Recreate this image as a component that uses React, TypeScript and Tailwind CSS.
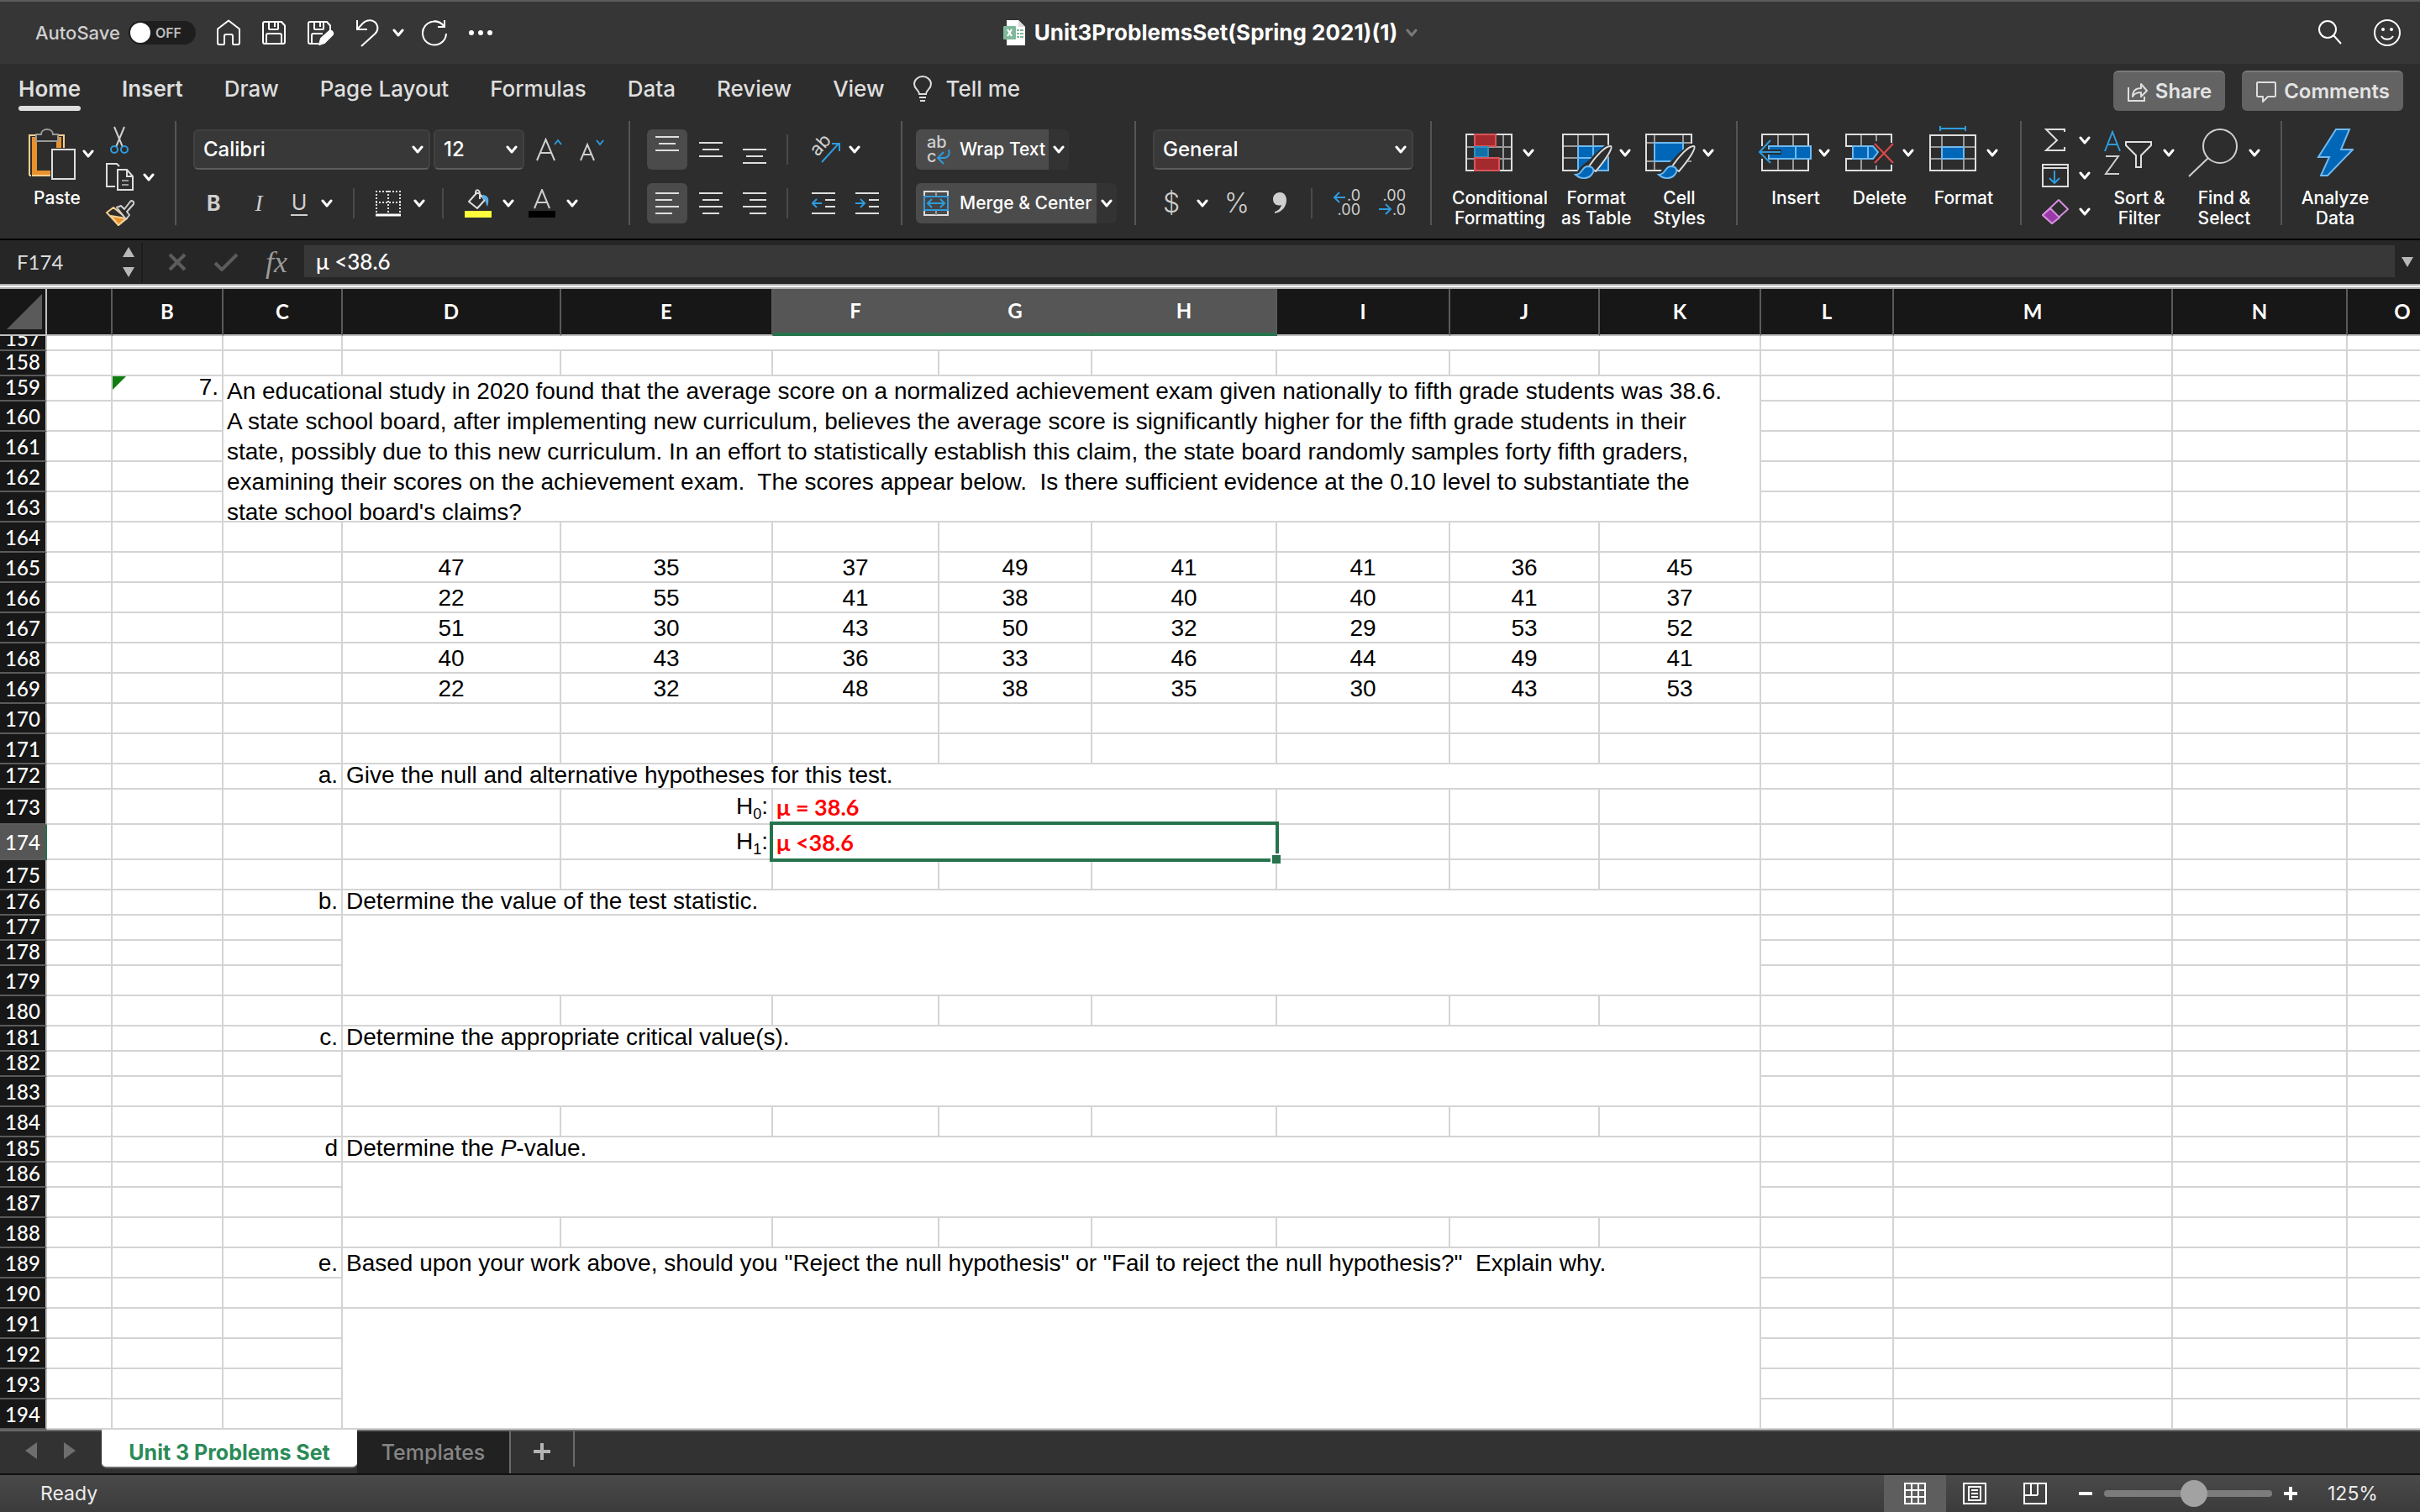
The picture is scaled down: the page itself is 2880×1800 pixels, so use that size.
import type { ReactNode } from 'react';

const FONT_UI = "font-['Inter','Liberation_Sans',sans-serif]";
const FONT_CELL = "font-['Liberation_Sans',Arial,sans-serif]";
const FONT_CALIBRI = "font-['Lato','Open_Sans',sans-serif]";

/* ---------- small shared pieces ---------- */

const Chevron = ({ color = '#fff' }: { color?: string }) => (
  <svg width="14" height="10" viewBox="0 0 14 10" fill="none" className="shrink-0">
    <path d="M2 2l5 6 5-6" stroke={color} strokeWidth="3" strokeLinecap="round" strokeLinejoin="round" />
  </svg>
);

const Divider = () => <span className="h-9 w-[2px] shrink-0 bg-[#4a4a4a]" />;

const DropButton = ({ label }: { label: string }) => (
  <button aria-label={label} className="flex h-6 shrink-0 items-center">
    <Chevron />
  </button>
);

const Group = ({ className, children }: { className: string; children: ReactNode }) => (
  <div className={`h-[124px] shrink-0 border-r-2 border-[#555] ${className}`}>{children}</div>
);

const BigButton = ({ icon, lines, arrow = true }: { icon: ReactNode; lines: string[]; arrow?: boolean }) => (
  <button className="flex min-w-[82px] flex-col items-center pt-1.5">
    <span className="flex h-16 items-center gap-3">
      {icon}
      {arrow && <Chevron />}
    </span>
    <span className="mt-2.5 text-center text-[21px] leading-6 font-medium whitespace-nowrap text-white">
      {lines.map((line) => (
        <span key={line} className="block">{line}</span>
      ))}
    </span>
  </button>
);

const SelectBox = ({ label, value, className }: { label: string; value: string; className: string }) => (
  <div className={`relative flex items-center ${className}`}>
    <select
      aria-label={label}
      defaultValue={value}
      className="h-12 w-full appearance-none rounded-md border-2 border-t-[#3f3f3f] border-r-[#424242] border-b-[#5c5c5c] border-l-[#424242] bg-[#383838] pl-2.5 text-[24px] leading-8 font-medium text-white"
    >
      <option>{value}</option>
    </select>
    <span className="pointer-events-none absolute right-2">
      <Chevron />
    </span>
  </div>
);

/* ---------- title bar ---------- */

const HomeIcon = () => (
  <svg width="30" height="32" viewBox="0 0 30 32" fill="none" stroke="#fff" strokeWidth="2" strokeLinejoin="round">
    <path d="M2 11.500L15 1.500l13 10V28a2 2 0 0 1-2 2h-5a1 1 0 0 1-1-1v-9a2 2 0 0 0-2-2h-6a2 2 0 0 0-2 2v9a1 1 0 0 1-1 1H4a2 2 0 0 1-2-2z" />
  </svg>
);

const SaveIcon = () => (
  <svg width="30" height="32" viewBox="0 0 30 32" fill="none" stroke="#fff" strokeWidth="2" strokeLinejoin="round">
    <path d="M4 3h20l4 4.500V27a2 2 0 0 1-2 2H4a2 2 0 0 1-2-2V5a2 2 0 0 1 2-2z" />
    <path d="M9 3v8a1 1 0 0 0 1 1h9a1 1 0 0 0 1-1V3M16 4v5M6 29V19a2 2 0 0 1 2-2h14a2 2 0 0 1 2 2v10" />
  </svg>
);

const SaveAsIcon = () => (
  <svg width="34" height="32" viewBox="0 0 34 32" fill="none" stroke="#fff" strokeWidth="2" strokeLinejoin="round">
    <path d="M14 29H4a2 2 0 0 1-2-2V5a2 2 0 0 1 2-2h20l4 4.500V13" />
    <path d="M9 3v8a1 1 0 0 0 1 1h9a1 1 0 0 0 1-1V3M16 4v5M6 29V19a2 2 0 0 1 2-2h11" />
    <path d="M15 30l2-7 10-9a3 3 0 0 1 4 4l-10 10z" fill="#fff" />
  </svg>
);

const UndoIcon = () => (
  <svg width="28" height="34" viewBox="0 0 28 34" fill="none" stroke="#fff" strokeWidth="2">
    <path d="M2 2v11h12" />
    <path d="M2.500 12.500L9 5.500c5-5 13-4 16 1 2.500 4.500 1.500 8.500-2 12L7 33" />
  </svg>
);

const RedoIcon = () => (
  <svg width="32" height="34" viewBox="0 0 32 34" fill="none" stroke="#fff" strokeWidth="2">
    <path d="M28 2v8h-8" />
    <path d="M27.500 9.500A14 14 0 1 0 30 18M27.500 9.500C25 5.500 20 3 16 3" />
  </svg>
);

const DotsIcon = () => (
  <svg width="30" height="8" viewBox="0 0 30 8" fill="#fff">
    <circle cx="4" cy="4" r="3" />
    <circle cx="15" cy="4" r="3" />
    <circle cx="26" cy="4" r="3" />
  </svg>
);

const FileIcon = () => (
  <svg width="28" height="32" viewBox="0 0 28 32">
    <path d="M5 1h14l8 8v22H5z" fill="#fff" />
    <path d="M19 1l8 8h-8z" fill="#dcdcdc" />
    <g fill="#7fb99b">
      <rect x="17" y="12" width="3" height="2" /><rect x="21" y="12" width="4" height="2" />
      <rect x="17" y="16" width="3" height="2" /><rect x="21" y="16" width="4" height="2" />
      <rect x="17" y="20" width="3" height="2" /><rect x="21" y="20" width="4" height="2" />
      <rect x="1" y="8" width="15" height="16" rx="1" />
    </g>
    <path d="M6 12l5 8M11 12l-5 8" stroke="#fff" strokeWidth="2" />
  </svg>
);

const TitleBar = () => (
  <header className="grid h-[76px] shrink-0 grid-cols-[1fr_auto_1fr] items-center border-t-2 border-[#5c5c5c] bg-[#363636]">
    <div className="flex items-center pl-[42px]">
      <label htmlFor="autosave" className="text-[22px] leading-8 font-medium text-[#cfcfcf]">AutoSave</label>
      <span className="relative ml-2.5 flex h-7 w-20 items-center rounded-full bg-[#1e1e1e]">
        <input id="autosave" type="checkbox" className="absolute inset-0 size-full appearance-none" />
        <span className="ml-0.5 size-6 rounded-full bg-white" />
        <span className="ml-1.5 text-[16px] leading-6 font-semibold text-[#bdbdbd]">OFF</span>
      </span>
      <div className="ml-6 flex items-center gap-6">
        <button aria-label="Home"><HomeIcon /></button>
        <button aria-label="Save"><SaveIcon /></button>
        <button aria-label="Save as"><SaveAsIcon /></button>
        <span className="flex items-center gap-4">
          <button aria-label="Undo"><UndoIcon /></button>
          <DropButton label="Undo list" />
        </span>
        <button aria-label="Redo" className="-ml-1"><RedoIcon /></button>
        <button aria-label="More"><DotsIcon /></button>
      </div>
    </div>
    <div className="flex items-center gap-2.5">
      <FileIcon />
      <h1 className="text-[26px] leading-8 font-bold text-white">Unit3ProblemsSet(Spring 2021)(1)</h1>
      <Chevron color="#7a7a7a" />
    </div>
    <div className="flex items-center justify-end gap-9 pr-[22px]">
      <button aria-label="Search">
        <svg width="30" height="32" viewBox="0 0 30 32" fill="none" stroke="#fff" strokeWidth="2">
          <circle cx="12" cy="12" r="10" />
          <path d="M19 19l9 10" />
        </svg>
      </button>
      <button aria-label="Feedback">
        <svg width="34" height="34" viewBox="0 0 34 34" fill="none" stroke="#fff" strokeWidth="2">
          <circle cx="17" cy="17" r="15" />
          <circle cx="12" cy="13" r="2" fill="#fff" stroke="none" />
          <circle cx="22" cy="13" r="2" fill="#fff" stroke="none" />
          <path d="M10 21c3 5 11 5 14 0" />
        </svg>
      </button>
    </div>
  </header>
);

/* ---------- ribbon tabs ---------- */

const tabs = ['Insert', 'Draw', 'Page Layout', 'Formulas', 'Data', 'Review', 'View'];

const RibbonTabs = () => (
  <nav className="flex h-[68px] shrink-0 items-start justify-between bg-[#2d2d2d] pr-5 pl-[22px]">
    <div className="flex gap-[49px] pt-3 text-[26px] leading-9 font-medium text-[#dedede]">
      <button className="flex flex-col font-semibold">
        Home
        <span className="mt-0.5 h-1.5 w-full rounded-full bg-[#dedede]" />
      </button>
      {tabs.map((tab) => (
        <button key={tab} className={tab === 'Insert' ? 'self-start font-semibold' : 'self-start'}>{tab}</button>
      ))}
      <button className="-ml-4 flex items-center gap-4 self-start">
        <svg width="24" height="32" viewBox="0 0 24 32" fill="none" stroke="#dedede" strokeWidth="2">
          <path d="M8 22c0-5-6-6-6-12a10 9 0 0 1 20 0c0 6-6 7-6 12z" />
          <path d="M8 26h8M9 30h6" />
        </svg>
        Tell me
      </button>
    </div>
    <div className="flex gap-5 pt-2 text-[24px] leading-8 font-semibold text-[#e4e4e4]">
      <button className="flex h-12 items-center gap-2 rounded-md border-t-2 border-[#7a7a7a] bg-[#636363] px-4">
        <svg width="26" height="26" viewBox="0 0 26 26" fill="none" stroke="#dedede" strokeWidth="2">
          <path d="M2 8v16h19v-5" />
          <path d="M7 19c0-7 4-10 10-10V4l7 8-7 7v-5c-5 0-8 1-10 5z" strokeLinejoin="round" />
        </svg>
        Share
      </button>
      <button className="flex h-12 items-center gap-2 rounded-md border-t-2 border-[#7a7a7a] bg-[#636363] px-4">
        <svg width="26" height="26" viewBox="0 0 26 26" fill="none" stroke="#dedede" strokeWidth="2" strokeLinejoin="round">
          <path d="M3 2h20a1 1 0 0 1 1 1v15a1 1 0 0 1-1 1h-8l-6 6v-6H3a1 1 0 0 1-1-1V3a1 1 0 0 1 1-1z" />
        </svg>
        Comments
      </button>
    </div>
  </nav>
);

/* ---------- ribbon icons ---------- */

const PasteIcon = () => (
  <svg width="56" height="62" viewBox="0 0 56 62" fill="none">
    <path d="M7 11v43h19M36 11v13" stroke="#e8912d" strokeWidth="6" />
    <path d="M4 57h22M1 57V9h8M34 9h8v15M3 57h-2" stroke="#f6cf8f" strokeWidth="2" />
    <path d="M9 16V8h6c0-8 14-8 14 0h6v8z" stroke="#9a9a9a" strokeWidth="2" fill="#2d2d2d" />
    <rect x="28" y="26" width="27" height="35" stroke="#dedede" strokeWidth="2" />
  </svg>
);

const CutIcon = () => (
  <svg width="24" height="34" viewBox="0 0 24 34" fill="none">
    <path d="M6 1l10 24M18 1L8 25" stroke="#cfcfcf" strokeWidth="2" />
    <circle cx="6" cy="28" r="4" stroke="#2f9bdc" strokeWidth="2" />
    <circle cx="18" cy="28" r="4" stroke="#2f9bdc" strokeWidth="2" />
  </svg>
);

const CopyIcon = () => (
  <svg width="34" height="34" viewBox="0 0 34 34" fill="none" stroke="#dedede" strokeWidth="2">
    <path d="M11 28H1V1h12l3 3" />
    <path d="M14 8h11l7 8v16H14zM25 8v8h7" />
    <path d="M19 21h8M19 26h8" stroke="#9a9a9a" />
  </svg>
);

const PainterIcon = () => (
  <svg width="34" height="32" viewBox="0 0 34 32" fill="none" strokeWidth="2" strokeLinejoin="round">
    <path d="M9 9L1 15l14 15 10-8z" fill="#2d2d2d" stroke="#f6cf8f" />
    <path d="M6 19l18 3-9 8z" fill="#e8912d" stroke="#f6cf8f" />
    <path d="M13 9l5-2 4 4 7-9c2-2 5 0 4 3l-8 9 3 4-4 5z" fill="#2d2d2d" stroke="#cfcfcf" />
  </svg>
);

const BordersIcon = () => (
  <svg width="32" height="32" viewBox="0 0 32 32" fill="none" stroke="#dedede" strokeWidth="2">
    <path d="M1 2h30M1 15h30" strokeDasharray="2 2" />
    <path d="M2 1v26M16 1v26M30 1v26" strokeDasharray="2 2" />
    <path d="M1 30h30" stroke="#fff" strokeWidth="3" />
  </svg>
);

const FillIcon = () => (
  <svg width="34" height="34" viewBox="0 0 34 34" fill="none">
    <path d="M15 5L6 15l10 8 9-10-7-8zM14 7c-1-8 5-7 5-1v6" stroke="#dedede" strokeWidth="2" strokeLinejoin="round" />
    <path d="M22 7c7 0 9 5 6 14-2-3-1-8-6-10z" fill="#5aaee6" />
    <rect x="1" y="26" width="32" height="8" fill="#ffff3c" />
  </svg>
);

const FontColorIcon = () => (
  <svg width="34" height="34" viewBox="0 0 34 34" fill="none">
    <path d="M8 23L17 1l9 22M11 16h12" stroke="#cfcfcf" strokeWidth="2" />
    <rect x="1" y="26" width="32" height="8" fill="#000" />
  </svg>
);

const GrowIcon = () => (
  <svg width="32" height="28" viewBox="0 0 32 28" fill="none" strokeWidth="2">
    <path d="M1 27L11.500 2 22 27M5 18h13" stroke="#cfcfcf" />
    <path d="M22 8l4-5 4 5" stroke="#2f9bdc" />
  </svg>
);

const ShrinkIcon = () => (
  <svg width="30" height="28" viewBox="0 0 30 28" fill="none" strokeWidth="2">
    <path d="M1 27L9 8l8 19M4 20h10" stroke="#cfcfcf" />
    <path d="M20 3l4 5 4-5" stroke="#2f9bdc" />
  </svg>
);

// each bar is [x, y, width]
const Bars = ({ bars, height }: { bars: number[][]; height: number }) => (
  <svg width="28" height={height} viewBox={`0 0 28 ${height}`} fill="#dedede">
    {bars.map(([x, y, w]) => (
      <rect key={y} x={x} y={y} width={w} height="2" />
    ))}
  </svg>
);

const IndentIcon = ({ right = false }: { right?: boolean }) => (
  <svg width="28" height="26" viewBox="0 0 28 26" fill="#dedede">
    <rect x="0" y="0" width="28" height="2" />
    <rect x="16" y="8" width="12" height="2" />
    <rect x="16" y="16" width="12" height="2" />
    <rect x="0" y="24" width="28" height="2" />
    <path d={right ? 'M0 13h11M6 8l5 5-5 5' : 'M12 13H1M6 8l-5 5 5 5'} stroke="#2f9bdc" strokeWidth="2" fill="none" />
  </svg>
);

const OrientationIcon = () => (
  <svg width="34" height="34" viewBox="0 0 34 34" fill="none" className="overflow-visible">
    <text x="7" y="26" fontSize="22" fill="#cfcfcf" transform="rotate(-48 7 26)">ab</text>
    <path d="M12 32L32 10M24 10h9v9" stroke="#2f9bdc" strokeWidth="2" />
  </svg>
);

const WrapIcon = () => (
  <svg width="30" height="36" viewBox="0 0 30 36" fill="none" className="shrink-0 overflow-visible">
    <text x="1" y="16" fontSize="20" fill="#cfcfcf">ab</text>
    <text x="1" y="33" fontSize="20" fill="#cfcfcf">c</text>
    <path d="M27 18c2 6-1 10-6 10h-7M21 21l-7 7 7 7" stroke="#2f9bdc" strokeWidth="2" />
  </svg>
);

const MergeIcon = () => (
  <svg width="32" height="32" viewBox="0 0 32 32" fill="none" strokeWidth="2" className="shrink-0">
    <rect x="2" y="2" width="28" height="28" stroke="#dedede" />
    <path d="M16 2v28" stroke="#9a9a9a" />
    <rect x="2" y="8" width="28" height="16" fill="#444" stroke="#2f9bdc" />
    <path d="M6 16h20M11 11l-5 5 5 5M21 11l5 5-5 5" stroke="#2f9bdc" />
  </svg>
);

const DecimalIcon = ({ more = false }: { more?: boolean }) => (
  <svg width="34" height="34" viewBox="0 0 34 34" fill="none" className="overflow-visible">
    <text x="33" y="14" fontSize="18" textAnchor="end" fill="#cfcfcf">{more ? '.0' : '.00'}</text>
    <text x="33" y="31" fontSize="18" textAnchor="end" fill="#cfcfcf">{more ? '.00' : '.0'}</text>
    <path d={more ? 'M15 10H2M8 4l-6 6 6 6' : 'M1 24h13M9 18l6 6-6 6'} stroke="#2f9bdc" strokeWidth="2" />
  </svg>
);

const ConditionalIcon = () => (
  <svg width="56" height="46" viewBox="0 0 56 46" fill="none" strokeWidth="2">
    <path d="M45 2v42M1 16h54M1 30h54" stroke="#9a9a9a" />
    <rect x="1" y="1" width="54" height="43" stroke="#dedede" />
    <rect x="11" y="1" width="25" height="14" fill="#a52a2e" stroke="#d9555a" />
    <rect x="11" y="16" width="16" height="12" fill="#1170a8" stroke="#2f8fc0" />
    <rect x="11" y="29" width="29" height="15" fill="#a52a2e" stroke="#d9555a" />
  </svg>
);

const Brush = () => (
  <>
    <path d="M18 46c5-10 14-12 20-21L52 13l8 2-2 9-22 28z" fill="#2d2d2d" />
    <path d="M32 39C40 27 52 14 58 15c3 2-6 16-18 30z" fill="#2d2d2d" stroke="#dedede" strokeWidth="2" strokeLinejoin="round" />
    <path d="M16 49c8 0 7-9 14-10 8 0 9 6 5 10-5 6-14 5-19 0z" fill="#0067b8" stroke="#6fb9ef" strokeWidth="2" />
  </>
);

const FormatTableIcon = () => (
  <svg width="60" height="54" viewBox="0 0 60 54" fill="none" strokeWidth="2" className="-mr-1 mt-2">
    <path d="M19 1v43M37 1v14M1 15h54M1 29h18" stroke="#9a9a9a" />
    <path d="M20 44H1V1h54v14" stroke="#dedede" />
    <path d="M19 15h36v29H19z" fill="#0067b8" stroke="#6fb9ef" />
    <path d="M37 15v29M19 29h36" stroke="#6fb9ef" />
    <Brush />
  </svg>
);

const CellStylesIcon = () => (
  <svg width="60" height="54" viewBox="0 0 60 54" fill="none" strokeWidth="2" className="-mr-1 mt-2">
    <path d="M11 1v43M45 1v10M1 11h54M1 33h54" stroke="#9a9a9a" />
    <path d="M55 12V1H1v43h34" stroke="#dedede" />
    <path d="M11 11h34v22H11z" fill="#0067b8" stroke="#6fb9ef" />
    <Brush />
  </svg>
);

const InsertCellsIcon = () => (
  <svg width="64" height="46" viewBox="0 0 64 46" fill="none" strokeWidth="2" className="-mx-1">
    <path d="M24 1v43M42 1v43" stroke="#9a9a9a" />
    <path d="M5 15V1h55v14M5 30v14h55V30" stroke="#dedede" />
    <rect x="13" y="15" width="50" height="15" fill="#0067b8" stroke="#6fb9ef" />
    <path d="M45 15v15" stroke="#6fb9ef" />
    <path d="M5 19h23v6H5z" fill="#2d2d2d" />
    <path d="M27 22H2M15 8L2 22l13 13" stroke="#2f9bdc" />
  </svg>
);

const DeleteCellsIcon = () => (
  <svg width="58" height="46" viewBox="0 0 58 46" fill="none" strokeWidth="2" className="-mr-0.5">
    <path d="M19 1v14M37 1v8M19 30v14M37 38v6" stroke="#9a9a9a" />
    <path d="M9 15H1V1h54v10M9 30H1v14h54v-7" stroke="#dedede" />
    <path d="M9 15h24l6 7-6 8H9z" fill="#0067b8" stroke="#6fb9ef" />
    <path d="M27 15v15" stroke="#6fb9ef" />
    <path d="M35 12l22 23M57 12L35 35" stroke="#e04a4a" strokeWidth="2" />
  </svg>
);

const FormatCellsIcon = () => (
  <svg width="56" height="56" viewBox="0 0 56 56" fill="none" strokeWidth="2" className="-mt-2.5">
    <path d="M13 4h30M13 1v6M43 1v6" stroke="#2f9bdc" />
    <path d="M15 11v43M41 11v43M1 26h54M1 40h54" stroke="#9a9a9a" />
    <rect x="1" y="12" width="54" height="42" stroke="#dedede" />
    <rect x="15" y="26" width="26" height="14" fill="#0067b8" stroke="#6fb9ef" />
  </svg>
);

const SigmaIcon = () => (
  <svg width="32" height="30" viewBox="0 0 32 30" fill="none" stroke="#dedede" strokeWidth="2">
    <path d="M27 5V2H5l13 13L5 27h22v-4" />
  </svg>
);

const FillDownIcon = () => (
  <svg width="32" height="30" viewBox="0 0 32 30" fill="none" strokeWidth="2">
    <rect x="1" y="2" width="30" height="26" stroke="#dedede" />
    <path d="M1 6h30" stroke="#dedede" />
    <path d="M15 9v15M9 18l6 6 6-6" stroke="#2f9bdc" />
  </svg>
);

const EraserIcon = () => (
  <svg width="32" height="32" viewBox="0 0 32 32" fill="none" stroke="#d48fdc" strokeWidth="2" strokeLinejoin="round">
    <path d="M20 2l11 11-19 17L1 20z" />
    <path d="M10 12l11 11-9 7L1 20z" fill="#9a3aa6" />
  </svg>
);

const SortIcon = () => (
  <svg width="58" height="54" viewBox="0 0 58 54" fill="none" strokeWidth="2">
    <path d="M1 25L10 2l9 23M4 17h12" stroke="#2f9bdc" />
    <path d="M2 31h15L2 52h16" stroke="#cfcfcf" />
    <path d="M26 14h30v4L44 30v14h-6V30L26 18z" stroke="#dedede" />
  </svg>
);

const FindIcon = () => (
  <svg width="60" height="60" viewBox="0 0 60 60" fill="none" stroke="#cfcfcf" strokeWidth="2">
    <circle cx="38" cy="22" r="20" />
    <path d="M24 36L1 58" />
  </svg>
);

const BoltIcon = () => (
  <svg width="44" height="60" viewBox="0 0 44 60" fill="#0067b8" stroke="#6fb9ef" strokeWidth="2">
    <path d="M23 2h16L29 26h14L13 57H5l10-22H2z" />
  </svg>
);

/* ---------- ribbon ---------- */

const Ribbon = () => (
  <section className="flex h-[142px] shrink-0 items-start overflow-hidden border-b-2 border-black bg-[#2d2d2d]">
    <Group className="flex w-[210px] gap-3.5 pl-7">
      <button className="flex w-[84px] flex-col items-start pt-2">
        <span className="flex items-center gap-2 pl-1.5">
          <PasteIcon />
          <Chevron />
        </span>
        <span className="mt-2.5 ml-3 text-[21px] leading-6 font-medium text-white">Paste</span>
      </button>
      <div className="flex flex-col gap-2.5 pt-1.5">
        <button aria-label="Cut" className="pl-1"><CutIcon /></button>
        <span className="flex items-center gap-2.5">
          <button aria-label="Copy"><CopyIcon /></button>
          <DropButton label="Copy options" />
        </span>
        <button aria-label="Format painter"><PainterIcon /></button>
      </div>
    </Group>

    <Group className="w-[540px] pt-2.5 pl-5">
      <div className="flex h-12 items-center">
        <SelectBox label="Font" value="Calibri" className="w-[282px]" />
        <SelectBox label="Font size" value="12" className="ml-1 w-[108px]" />
        <button aria-label="Increase font size" className="ml-3.5"><GrowIcon /></button>
        <button aria-label="Decrease font size" className="ml-5"><ShrinkIcon /></button>
      </div>
      <div className="mt-4 flex h-12 items-center pl-4 text-[#cfcfcf]">
        <button aria-label="Bold" className="w-5 text-left text-[25px] leading-8 font-bold">B</button>
        <button aria-label="Italic" className="ml-8 w-5 text-[27px] leading-8 italic font-['Liberation_Serif',serif]">I</button>
        <button aria-label="Underline" className="ml-7 w-5 border-b-2 border-[#cfcfcf] text-[25px] leading-7">U</button>
        <span className="ml-4 flex"><DropButton label="Underline options" /></span>
        <span className="ml-6 flex items-center gap-6"><Divider /><button aria-label="Borders"><BordersIcon /></button></span>
        <span className="ml-3.5 flex"><DropButton label="Border options" /></span>
        <span className="ml-5 flex items-center gap-6"><Divider /><button aria-label="Fill colour"><FillIcon /></button></span>
        <span className="ml-3 flex"><DropButton label="Fill options" /></span>
        <button aria-label="Font colour" className="ml-4"><FontColorIcon /></button>
        <span className="ml-3 flex"><DropButton label="Font colour options" /></span>
      </div>
    </Group>

    <Group className="w-[324px] pt-2.5 pl-5">
      <div className="flex h-12 items-center">
        <button aria-label="Top align" className="flex h-12 w-12 justify-center rounded-md bg-[#4b4b4b] pt-2">
          <Bars height={18} bars={[[0, 0, 28], [4, 8, 20], [0, 16, 28]]} />
        </button>
        <button aria-label="Middle align" className="ml-3.5"><Bars height={18} bars={[[0, 0, 28], [4, 8, 20], [0, 16, 28]]} /></button>
        <button aria-label="Bottom align" className="ml-6 pt-4"><Bars height={18} bars={[[0, 0, 28], [4, 8, 20], [0, 16, 28]]} /></button>
        <span className="ml-6 flex items-center gap-7"><Divider /><button aria-label="Orientation"><OrientationIcon /></button></span>
        <span className="ml-2.5 flex"><DropButton label="Orientation options" /></span>
      </div>
      <div className="mt-4 flex h-12 items-center">
        <button aria-label="Align left" className="flex h-12 w-12 items-center justify-center rounded-md bg-[#4b4b4b]">
          <Bars height={26} bars={[[0, 0, 28], [0, 8, 20], [0, 16, 28], [0, 24, 20]]} />
        </button>
        <button aria-label="Align centre" className="ml-3.5"><Bars height={26} bars={[[0, 0, 28], [4, 8, 20], [0, 16, 28], [4, 24, 20]]} /></button>
        <button aria-label="Align right" className="ml-6"><Bars height={26} bars={[[0, 0, 28], [8, 8, 20], [0, 16, 28], [8, 24, 20]]} /></button>
        <span className="ml-6 flex items-center gap-7"><Divider /><button aria-label="Decrease indent"><IndentIcon /></button></span>
        <button aria-label="Increase indent" className="ml-6"><IndentIcon right /></button>
      </div>
    </Group>

    <Group className="flex w-[278px] flex-col items-start gap-4 pt-2.5 pl-4 text-[21px] leading-8 font-medium text-white">
      <div className="flex h-12 overflow-hidden rounded-md">
        <button className="flex w-[158px] items-center gap-2.5 bg-[#4b4b4b] pl-3 whitespace-nowrap"><WrapIcon />Wrap Text</button>
        <button aria-label="Wrap options" className="flex w-6 items-center justify-center bg-[#333]"><Chevron /></button>
      </div>
      <div className="flex h-12 overflow-hidden rounded-md">
        <button className="flex w-[215px] items-center gap-3 bg-[#4b4b4b] pl-2 whitespace-nowrap"><MergeIcon />Merge &amp; Center</button>
        <button aria-label="Merge options" className="flex w-6 items-center justify-center bg-[#333]"><Chevron /></button>
      </div>
    </Group>

    <Group className="w-[352px] pt-2.5 pl-5">
      <SelectBox label="Number format" value="General" className="w-[310px]" />
      <div className="mt-4 flex h-12 items-center pl-3 text-[#cfcfcf]">
        <button aria-label="Currency" className="w-5 text-[32px] leading-9 font-light">$</button>
        <span className="ml-5 flex"><DropButton label="Currency options" /></span>
        <button aria-label="Percent" className="ml-4 w-9 text-center text-[32px] leading-9 font-light">%</button>
        <button aria-label="Comma style" className="ml-6 flex">
          <svg width="18" height="28" viewBox="0 0 18 28" fill="#cfcfcf">
            <path d="M9 1c5 0 8 4 8 9 0 8-5 14-14 16v-2c4-1 7-4 8-8-6 2-10-2-10-7 0-4 3-8 8-8z" />
          </svg>
        </button>
        <span className="ml-7 flex items-center gap-6"><Divider /><button aria-label="Increase decimal"><DecimalIcon more /></button></span>
        <button aria-label="Decrease decimal" className="ml-5"><DecimalIcon /></button>
      </div>
    </Group>

    <Group className="flex w-[364px] items-start gap-4 pl-6">
      <BigButton icon={<ConditionalIcon />} lines={['Conditional', 'Formatting']} />
      <BigButton icon={<FormatTableIcon />} lines={['Format', 'as Table']} />
      <BigButton icon={<CellStylesIcon />} lines={['Cell', 'Styles']} />
    </Group>

    <Group className="flex w-[338px] items-start gap-[18px] pl-7">
      <BigButton icon={<InsertCellsIcon />} lines={['Insert']} />
      <BigButton icon={<DeleteCellsIcon />} lines={['Delete']} />
      <BigButton icon={<FormatCellsIcon />} lines={['Format']} />
    </Group>

    <Group className="flex w-[310px] items-start gap-4 pl-6">
      <div className="flex flex-col gap-3 pt-2">
        <span className="flex items-center gap-3"><button aria-label="AutoSum"><SigmaIcon /></button><DropButton label="AutoSum options" /></span>
        <span className="flex items-center gap-3"><button aria-label="Fill"><FillDownIcon /></button><DropButton label="Fill direction" /></span>
        <span className="flex items-center gap-3"><button aria-label="Clear"><EraserIcon /></button><DropButton label="Clear options" /></span>
      </div>
      <BigButton icon={<SortIcon />} lines={['Sort &', 'Filter']} />
      <BigButton icon={<FindIcon />} lines={['Find &', 'Select']} />
    </Group>

    <div className="flex flex-1 pl-[22px]">
      <BigButton icon={<BoltIcon />} lines={['Analyze', 'Data']} arrow={false} />
    </div>
  </section>
);

/* ---------- formula bar ---------- */

const FormulaBar = () => (
  <section className="flex h-[52px] shrink-0 items-center bg-[#262626]">
    <div className="flex h-12 w-[170px] items-center justify-between border-r-2 border-[#1c1c1c] pr-2 pl-5">
      <input aria-label="Name box" defaultValue="F174" className={`${FONT_CALIBRI} w-24 bg-transparent text-[24px] leading-8 text-[#dedede]`} />
      <svg width="14" height="36" viewBox="0 0 14 36" fill="#b8b8b8">
        <path d="M7 0l7 12H0zM7 36l7-12H0z" />
      </svg>
    </div>
    <div className="flex w-48 items-center pl-[30px]">
      <button aria-label="Cancel">
        <svg width="22" height="22" viewBox="0 0 22 22" stroke="#5c5c5c" strokeWidth="4"><path d="M2 2l18 18M20 2L2 20" /></svg>
      </button>
      <button aria-label="Enter" className="ml-8">
        <svg width="30" height="22" viewBox="0 0 30 22" fill="none" stroke="#5c5c5c" strokeWidth="4"><path d="M2 12l8 8L28 2" /></svg>
      </button>
      <button aria-label="Insert function" className="ml-8 text-[36px] leading-9 text-[#9a9a9a] italic font-['Liberation_Serif',serif]">fx</button>
    </div>
    <input aria-label="Formula" defaultValue="μ <38.6" className={`${FONT_CALIBRI} mb-0.5 h-[38px] flex-1 bg-[#383838] pl-3.5 text-[26px] leading-8 font-medium text-white`} />
    <button aria-label="Expand formula bar" className="flex w-[30px] justify-center">
      <svg width="14" height="12" viewBox="0 0 14 12" fill="#b8b8b8"><path d="M0 0h14L7 12z" /></svg>
    </button>
  </section>
);

/* ---------- sheet ---------- */

const columns = ['A', 'B', 'C', 'D', 'E', 'F', 'G', 'H', 'I', 'J', 'K', 'L', 'M', 'N', 'O'];

const columnWidths = [
  'w-[78px]', 'w-[132px]', 'w-[142px]', 'w-[260px]', 'w-[252px]', 'w-[198px]', 'w-[182px]', 'w-[220px]',
  'w-[206px]', 'w-[178px]', 'w-[192px]', 'w-[158px]', 'w-[332px]', 'w-[208px]', 'w-[132px]',
];

const shortRows = [158, 159, 172, 176, 177, 178, 181, 182, 185, 186];

const rowHeight = (row: number) => {
  if (row === 157) return 'h-[18px]';
  if (row === 173 || row === 174) return 'h-[42px] [&>*]:pt-0.5';
  return shortRows.includes(row) ? 'h-[30px] [&>*]:pb-0.5' : 'h-9 [&>*]:pt-0.5';
};

interface Merge {
  row: number;
  from: string;
  to: string;
  rows: number;
}

const merges: Merge[] = [
  { row: 157, from: 'D', to: 'K', rows: 1 },
  { row: 159, from: 'C', to: 'K', rows: 5 },
  { row: 172, from: 'D', to: 'K', rows: 1 },
  { row: 173, from: 'F', to: 'H', rows: 1 },
  { row: 174, from: 'F', to: 'H', rows: 1 },
  { row: 176, from: 'D', to: 'K', rows: 1 },
  { row: 177, from: 'D', to: 'K', rows: 3 },
  { row: 181, from: 'D', to: 'K', rows: 1 },
  { row: 182, from: 'D', to: 'K', rows: 2 },
  { row: 185, from: 'D', to: 'K', rows: 1 },
  { row: 186, from: 'D', to: 'K', rows: 2 },
  { row: 189, from: 'D', to: 'K', rows: 2 },
  { row: 191, from: 'D', to: 'K', rows: 4 },
];

const scores = [
  [47, 35, 37, 49, 41, 41, 36, 45],
  [22, 55, 41, 38, 40, 40, 41, 37],
  [51, 30, 43, 50, 32, 29, 53, 52],
  [40, 43, 36, 33, 46, 44, 49, 41],
  [22, 32, 48, 38, 35, 30, 43, 53],
];

const problem = [
  'An educational study in 2020 found that the average score on a normalized achievement exam given nationally to fifth grade students was 38.6.',
  'A state school board, after implementing new curriculum, believes the average score is significantly higher for the fifth grade students in their',
  'state, possibly due to this new curriculum. In an effort to statistically establish this claim, the state board randomly samples forty fifth graders,',
  'examining their scores on the achievement exam.  The scores appear below.  Is there sufficient evidence at the 0.10 level to substantiate the',
  "state school board's claims?",
].join('\n');

const Sub = ({ children }: { children: ReactNode }) => (
  <span className="relative top-1.5 text-[18px]">{children}</span>
);

const answer = `${FONT_CALIBRI} px-1 text-[27px] font-bold text-[#ff0000]`;

const cells: Record<string, { className: string; content: ReactNode }> = {
  B159: {
    className: 'relative px-1 text-right',
    content: (
      <>
        <svg width="16" height="16" viewBox="0 0 16 16" className="absolute top-0 left-0"><path d="M0 0h16L0 16z" fill="#107c10" /></svg>
        7.
      </>
    ),
  },
  C159: {
    className: 'px-1 align-top',
    content: <div className="h-[170px] leading-9 whitespace-pre">{problem}</div>,
  },
  C172: { className: 'px-1 text-right', content: 'a.' },
  D172: { className: 'px-1', content: 'Give the null and alternative hypotheses for this test.' },
  E173: { className: 'px-1 text-right', content: <>H<Sub>0</Sub>:</> },
  F173: { className: answer, content: 'μ = 38.6' },
  E174: { className: 'px-1 text-right', content: <>H<Sub>1</Sub>:</> },
  F174: {
    className: `relative ${answer}`,
    content: (
      <>
        μ &lt;38.6
        <span className="absolute -inset-1 z-10 border-4 border-[#26734d]" />
        <span className="absolute -right-1.5 -bottom-1.5 z-10 size-3 border-t-2 border-l-2 border-white bg-[#26734d]" />
      </>
    ),
  },
  C176: { className: 'px-1 text-right', content: 'b.' },
  D176: { className: 'px-1', content: 'Determine the value of the test statistic.' },
  C181: { className: 'px-1 text-right', content: 'c.' },
  D181: { className: 'px-1', content: 'Determine the appropriate critical value(s).' },
  C185: { className: 'px-1 text-right', content: 'd' },
  D185: { className: 'px-1', content: <>Determine the <i>P</i>-value.</> },
  C189: { className: 'px-1 text-right', content: 'e.' },
  D189: {
    className: 'px-1 align-top leading-8 whitespace-pre',
    content: 'Based upon your work above, should you "Reject the null hypothesis" or "Fail to reject the null hypothesis?"  Explain why.',
  },
};

scores.forEach((line, i) => {
  line.forEach((score, j) => {
    cells[`${columns[j + 3]}${165 + i}`] = { className: 'text-center', content: score };
  });
});

const findMerge = (row: number, col: string) =>
  merges.find((m) => row >= m.row && row < m.row + m.rows && col >= m.from && col <= m.to);

const SheetCell = ({ row, col }: { row: number; col: string }) => {
  const merge = findMerge(row, col);
  if (merge && (merge.row !== row || merge.from !== col)) return null;
  const cell = cells[`${col}${row}`];
  const span = merge ? columns.indexOf(merge.to) - columns.indexOf(merge.from) + 1 : 1;
  return (
    <td colSpan={span} rowSpan={merge?.rows ?? 1} className={`border-r-2 border-b-2 border-[#d4d4d4] ${cell?.className ?? ''}`}>
      {cell?.content}
    </td>
  );
};

const headerClass = (col: string) => {
  if (col === 'F' || col === 'G') return 'border-b-4 border-r-[#565656] border-b-[#26734d] bg-[#565656]';
  if (col === 'H') return 'border-b-4 border-r-[#5a5a5a] border-b-[#26734d] bg-[#565656]';
  return 'border-b-2 border-r-[#5a5a5a] border-b-[#c0c0c0] bg-[#171717]';
};

const rows = Array.from({ length: 38 }, (_, i) => 157 + i);

const Sheet = () => (
  <main className="min-h-0 flex-1 overflow-hidden bg-white">
    <table className={`${FONT_CELL} w-[2926px] table-fixed border-separate border-spacing-0 text-[28px] leading-[26px] text-black`}>
      <colgroup>
        <col className="w-14" />
        {columnWidths.map((width, i) => <col key={columns[i]} className={width} />)}
      </colgroup>
      <thead>
        <tr className={`${FONT_CALIBRI} h-14 text-[24px] text-white`}>
          <td className="border-r-2 border-b-2 border-r-[#c0c0c0] border-b-[#c0c0c0] bg-[#171717]">
            <svg width="42" height="42" viewBox="0 0 42 42" className="ml-2"><path d="M42 0v42H0z" fill="#5a5a5a" /></svg>
          </td>
          {columns.map((col) => (
            <th key={col} scope="col" className={`border-r-2 font-bold ${headerClass(col)}`}>{col === 'A' ? '' : col}</th>
          ))}
        </tr>
      </thead>
      <tbody>
        {rows.map((row) => (
          <tr key={row} className={rowHeight(row)}>
            <th
              scope="row"
              className={`${FONT_CALIBRI} border-r-2 border-b-2 border-b-[#5a5a5a] text-[24px] font-medium text-white ${row === 174 ? 'border-r-[#26734d] bg-[#565656]' : 'border-r-[#c0c0c0] bg-[#171717]'}`}
            >
              {row === 157 ? <span className="flex h-4 items-end justify-center overflow-hidden">{row}</span> : row}
            </th>
            {columns.map((col) => <SheetCell key={col} row={row} col={col} />)}
          </tr>
        ))}
      </tbody>
    </table>
  </main>
);

/* ---------- sheet tabs and status bar ---------- */

const SheetTabs = () => (
  <nav className="flex h-[52px] shrink-0 items-start border-t-2 border-[#6a6a6a] bg-[#323232] text-[25px] leading-8">
    <div className="flex h-[50px] w-[121px] items-center gap-8 pb-1 pl-[30px]">
      <button aria-label="Previous sheet"><svg width="14" height="20" viewBox="0 0 14 20" fill="#6e6e6e"><path d="M14 0v20L0 10z" /></svg></button>
      <button aria-label="Next sheet"><svg width="14" height="20" viewBox="0 0 14 20" fill="#6e6e6e"><path d="M0 0v20l14-10z" /></svg></button>
    </div>
    <button className="-mt-0.5 flex h-[46px] w-[304px] items-center justify-center rounded-b-md border-b-2 border-[#6a6a6a] bg-white pt-2.5 font-bold whitespace-nowrap text-[#2b8a57]">
      Unit 3 Problems Set
    </button>
    <button className="flex h-[50px] w-[183px] items-center justify-center border-r-2 border-[#6a6a6a] bg-[#212121] font-medium text-[#858585]">Templates</button>
    <button aria-label="Add sheet" className="flex h-[42px] w-[76px] items-center justify-center border-r-2 border-[#6a6a6a] pt-1.5">
      <svg width="20" height="20" viewBox="0 0 20 20" stroke="#b4b4b4" strokeWidth="4"><path d="M10 0v20M0 10h20" /></svg>
    </button>
  </nav>
);

const StatusBar = () => (
  <footer className="flex h-[46px] shrink-0 items-center border-t-2 border-[#111] bg-linear-to-b from-[#4a4a4a] to-[#3b3b3b] text-[23px] leading-8 text-[#ececec]">
    <span className="flex-1 pl-12">Ready</span>
    <button aria-label="Normal view" className="flex h-full w-[74px] items-center justify-center bg-[#5e5e5e]">
      <svg width="26" height="26" viewBox="0 0 26 26" fill="none" stroke="#fff" strokeWidth="2">
        <rect x="1" y="1" width="24" height="24" />
        <path d="M9 1v24M17 1v24M1 9h24M1 17h24" />
      </svg>
    </button>
    <button aria-label="Page layout view" className="ml-5">
      <svg width="28" height="26" viewBox="0 0 28 26" fill="none" stroke="#fff" strokeWidth="2">
        <rect x="1" y="1" width="26" height="24" />
        <path d="M7 5h14v16H7zM10 9h8M10 13h8M10 17h8" />
      </svg>
    </button>
    <button aria-label="Page break view" className="ml-11">
      <svg width="28" height="26" viewBox="0 0 28 26" fill="none" stroke="#fff" strokeWidth="2">
        <rect x="1" y="1" width="26" height="24" />
        <path d="M9 1v14M17 1v14M1 15h16" />
      </svg>
    </button>
    <button aria-label="Zoom out" className="ml-[38px]">
      <svg width="16" height="16" viewBox="0 0 16 16"><rect y="6" width="16" height="4" rx="1" fill="#fff" /></svg>
    </button>
    <input
      type="range"
      aria-label="Zoom"
      min="0"
      max="100"
      defaultValue="54"
      className="ml-3.5 h-8 w-[200px] appearance-none bg-transparent [&::-webkit-slider-runnable-track]:h-2 [&::-webkit-slider-runnable-track]:rounded-full [&::-webkit-slider-runnable-track]:bg-[#7c7c7c] [&::-webkit-slider-thumb]:-mt-3 [&::-webkit-slider-thumb]:size-8 [&::-webkit-slider-thumb]:appearance-none [&::-webkit-slider-thumb]:rounded-full [&::-webkit-slider-thumb]:bg-[#a2a2a2]"
    />
    <button aria-label="Zoom in" className="ml-3.5">
      <svg width="16" height="16" viewBox="0 0 16 16" stroke="#fff" strokeWidth="4"><path d="M8 0v16M0 8h16" /></svg>
    </button>
    <span className="w-[146px] pl-9">125%</span>
  </footer>
);

export default function App() {
  return (
    <div className={`${FONT_UI} flex h-screen w-full flex-col overflow-hidden bg-[#2d2d2d]`}>
      <TitleBar />
      <RibbonTabs />
      <Ribbon />
      <FormulaBar />
      <div className="h-1.5 shrink-0 border-y-2 border-[#b0b0b0] bg-white" />
      <Sheet />
      <SheetTabs />
      <StatusBar />
    </div>
  );
}
